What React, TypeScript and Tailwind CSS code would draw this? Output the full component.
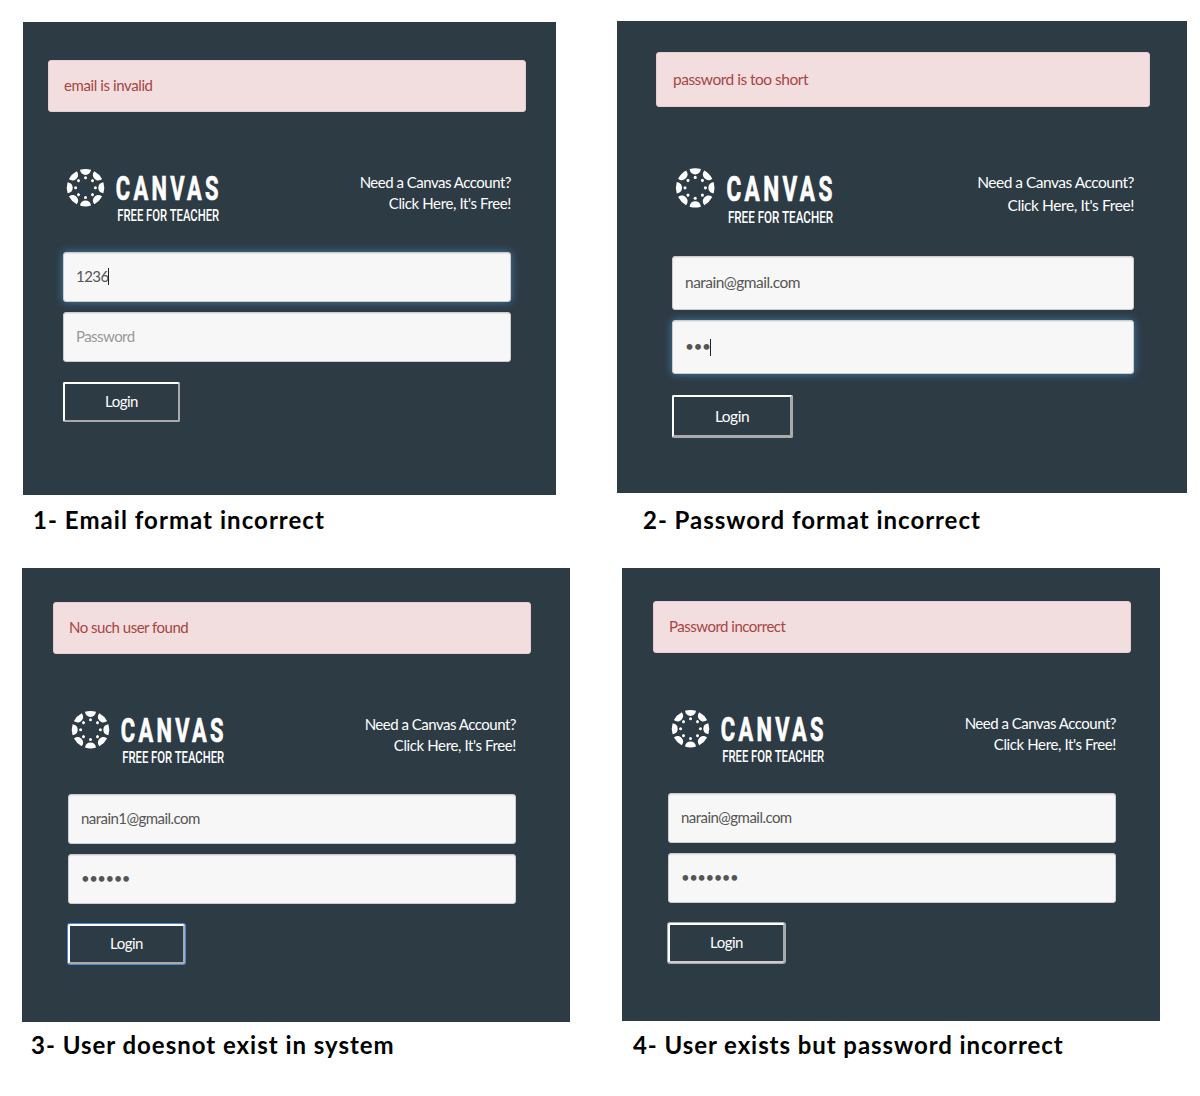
type Variant = {
  caption: string;
  error: string;
  email: string;
  password: string;
  placeholder?: boolean;
  focus?: "email" | "password";
  cell: string;
  panel: string;
  alert: string;
  form: string;
  header: string;
  logo: string;
  link: string;
  field: string;
  fieldText: string;
  button: string;
  captionText: string;
};

const variants: Variant[] = [
  {
    caption: "1- Email format incorrect",
    error: "email is invalid",
    email: "1236",
    password: "Password",
    placeholder: true,
    focus: "email",
    cell: "ml-[23px] mt-[22px] w-[533px]",
    panel: "h-[473px] pt-[38px] pl-[25px]",
    alert: "h-[52px] w-[478px] pl-[15px] pb-px text-[15px] tracking-[-0.4px]",
    form: "ml-[15px] w-[448px] pt-[53px]",
    header: "h-[87px]",
    logo: "h-[60px] w-[160px]",
    link: "pt-[7px] text-[15px] leading-[21px]",
    field: "h-[50px] pb-px",
    fieldText: "text-[15px] tracking-[-0.55px]",
    button: "mt-5 h-[40px] w-[117px] border-2 pb-[2px] text-[15px]",
    captionText: "mt-[9px] ml-[10px] tracking-[1.04px]",
  },
  {
    caption: "2- Password format incorrect",
    error: "password is too short",
    email: "narain@gmail.com",
    password: "•••",
    focus: "password",
    cell: "ml-[61px] mt-[21px] w-[570px]",
    panel: "h-[472px] pt-[31px] pl-[39px]",
    alert: "h-[55px] w-[494px] pl-[16px] text-[15.5px] tracking-[-0.5px]",
    form: "ml-[16px] w-[462px] pt-[56px]",
    header: "h-[93px]",
    logo: "mt-px h-[63px] w-[165px]",
    link: "pt-[8px] text-[15.5px] leading-[22.6px]",
    field: "h-[54px]",
    fieldText: "text-[15.5px] tracking-[-0.52px]",
    button: "mt-[21px] h-[43px] w-[121px] border-2 border-r-3 border-b-3 pt-px text-[15.5px]",
    captionText: "mt-[11px] ml-[26px] tracking-[0.96px]",
  },
  {
    caption: "3- User doesnot exist in system",
    error: "No such user found",
    email: "narain1@gmail.com",
    password: "••••••",
    cell: "ml-[22px] mt-[20px] w-[548px]",
    panel: "h-[454px] pt-[34px] pl-[31px]",
    alert: "h-[52px] w-[478px] pl-[15px] pb-px text-[15px] tracking-[-0.5px]",
    form: "ml-[15px] w-[448px] pt-[53px]",
    header: "h-[87px]",
    logo: "h-[60px] w-[160px]",
    link: "pt-[7px] text-[15px] leading-[21px]",
    field: "h-[50px] pb-px",
    fieldText: "text-[15px] tracking-[-0.54px]",
    button: "mt-5 h-[40px] w-[117px] border-2 pb-[2px] text-[15px] shadow-[0_0_0_1px_#5089d8]",
    captionText: "mt-[7px] ml-[9px] tracking-[0.98px]",
  },
  {
    caption: "4- User exists but password incorrect",
    error: "Password incorrect",
    email: "narain@gmail.com",
    password: "•••••••",
    cell: "ml-[52px] mt-[20px] w-[538px]",
    panel: "h-[453px] pt-[33px] pl-[31px]",
    alert: "h-[52px] w-[478px] pl-[15px] pb-px text-[15px] tracking-[-0.5px]",
    form: "ml-[15px] w-[448px] pt-[53px]",
    header: "h-[87px]",
    logo: "h-[60px] w-[160px]",
    link: "pt-[7px] text-[15px] leading-[21px]",
    field: "h-[50px] pb-px",
    fieldText: "text-[15px] tracking-[-0.54px]",
    button: "mt-5 h-[40px] w-[117px] border-2 border-b-[#ccc] pb-[2px] text-[15px] shadow-[0_0_0_1px_#a5abaf]",
    captionText: "mt-[8px] ml-[11px] tracking-[0.93px]",
  },
];

function Logo({ className }: { className: string }) {
  return (
    <svg viewBox="0 0 160 60" preserveAspectRatio="none" className={`overflow-visible ${className}`} fill="#fff">
      <g transform="translate(22.5 22.7)">
        {[0, 45, 90, 135, 180, 225, 270, 315].map((angle) => (
          <g key={angle} transform={`rotate(${angle})`}>
            <path d="M-5.5-17.9A18.7 18.7 0 0 1 5.5-17.9C5-14.4 3-12.8 0-12.8S-5-14.4-5.5-17.9Z" />
            <circle cy="-9.9" r="1.5" />
          </g>
        ))}
      </g>
      <text
        x="52.8"
        y="35.2"
        fontSize="33"
        fontWeight="700"
        fontFamily="Roboto"
        textLength="106"
        lengthAdjust="spacingAndGlyphs"
        letterSpacing="5"
        stroke="#fff"
        strokeWidth="0.7"
      >
        CANVAS
      </text>
      <text x="54.2" y="56" fontSize="16.2" fontWeight="500" fontFamily="Roboto" textLength="102" lengthAdjust="spacingAndGlyphs">
        FREE FOR TEACHER
      </text>
    </svg>
  );
}

function Field({ value, v, focused, muted }: { value: string; v: Variant; focused: boolean; muted?: boolean }) {
  return (
    <div
      className={`flex items-center rounded-[3px] border border-[#ccc] bg-[#f7f7f7] pl-3 ${v.field} ${v.fieldText} ${
        muted ? "text-[#999]" : "text-[#555]"
      } ${focused ? "shadow-[inset_0_1px_1px_rgba(0,0,0,0.075),0_0_8px_rgba(82,168,236,0.6)]" : "shadow-[inset_0_1px_1px_rgba(0,0,0,0.075)]"}`}
    >
      <span>{value}</span>
      {focused && <span className="-ml-[0.5px] h-[17px] w-px bg-[#222]" />}
    </div>
  );
}

function Screen({ v }: { v: Variant }) {
  return (
    <section className={`shrink-0 ${v.cell}`}>
      <div className={`bg-[#2d3b45] ${v.panel}`}>
        <div className={`flex items-center rounded-[3px] border border-[#ebccd1] bg-[#f2dede] text-[#a94442] ${v.alert}`}>
          {v.error}
        </div>
        <div className={v.form}>
          <div className={`flex items-start justify-between ${v.header}`}>
            <Logo className={v.logo} />
            <div className={`text-right text-white ${v.link}`}>
              <div className="tracking-[-0.5px]">Need a Canvas Account?</div>
              <div className="tracking-[-0.39px]">Click Here, It's Free!</div>
            </div>
          </div>
          <div className="flex flex-col gap-[10px]">
            <Field value={v.email} v={v} focused={v.focus === "email"} />
            <Field value={v.password} v={v} focused={v.focus === "password"} muted={v.placeholder} />
          </div>
          <button
            className={`flex items-center justify-center rounded-[2px] border-t-white border-r-[#aaa] border-b-[#aaa] border-l-white tracking-[-0.5px] text-white ${v.button}`}
          >
            Login
          </button>
        </div>
      </div>
      <h2 className={`text-2xl leading-8 font-bold whitespace-nowrap text-black ${v.captionText}`}>{v.caption}</h2>
    </section>
  );
}

export default function App() {
  return (
    <main className="h-[1096px] w-[1200px] overflow-hidden bg-white font-['Lato',sans-serif]">
      <div className="flex h-[548px] items-start">
        <Screen v={variants[0]} />
        <Screen v={variants[1]} />
      </div>
      <div className="flex h-[548px] items-start">
        <Screen v={variants[2]} />
        <Screen v={variants[3]} />
      </div>
    </main>
  );
}
